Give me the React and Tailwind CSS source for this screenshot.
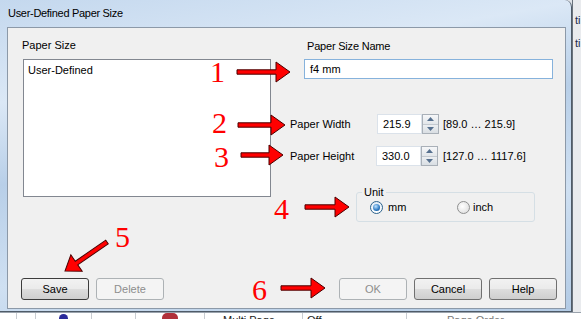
import React from 'react';

const sans = "font-['Liberation_Sans',Arial,sans-serif]";

function Button({ label, disabled, focused, className = '' }) {
    return (
        <div
            className={`w-[68px] h-[22px] rounded-[3px] border flex items-center justify-center text-[11px] ${className} ${
                disabled
                    ? 'border-[#adb2b5] bg-[#f4f4f4] text-[#8d8d8d]'
                    : `${focused ? 'border-[#3c3c3c]' : 'border-[#707070]'} bg-[linear-gradient(#f2f2f2_0%,#ebebeb_48%,#dddddd_52%,#cfcfcf_100%)] text-black`
            }`}
        >
            {label}
        </div>
    );
}

function Spin({ value }) {
    return (
        <div className="flex h-[20px] w-[62px]">
            <div className="flex-1 bg-white border border-[#dbe2ea] pl-[5px] flex items-center text-[11px]">
                {value}
            </div>
            <div className="w-[17px] flex flex-col border border-[#a9b0b8] bg-white">
                <div className="flex-1 flex items-center justify-center border-b border-[#c3c9d0] bg-[linear-gradient(#f6f7f9,#e2e6ea)]">
                    <svg width="7" height="4" viewBox="0 0 7 4"><path d="M0 4 L3.5 0 L7 4 Z" fill="#56708f" /></svg>
                </div>
                <div className="flex-1 flex items-center justify-center bg-[linear-gradient(#eceff2,#d9dee3)]">
                    <svg width="7" height="4" viewBox="0 0 7 4"><path d="M0 0 L3.5 4 L7 0 Z" fill="#56708f" /></svg>
                </div>
            </div>
        </div>
    );
}

function Radio({ checked }) {
    return (
        <div
            className={`w-[13px] h-[13px] rounded-full border flex items-center justify-center ${
                checked
                    ? 'border-[#2c628b] bg-[linear-gradient(#e3eef8,#ffffff)]'
                    : 'border-[#8e8f8f] bg-[radial-gradient(circle_at_40%_40%,#ffffff,#d8d8d8)]'
            }`}
        >
            {checked && (
                <div className="w-[7px] h-[7px] rounded-full bg-[radial-gradient(circle_at_40%_35%,#bfe3ff,#2a78c2_60%,#14467a)]" />
            )}
        </div>
    );
}

function Arrow({ x1, y1, x2, y2 }) {
    const dx = x2 - x1;
    const dy = y2 - y1;
    const len = Math.sqrt(dx * dx + dy * dy);
    const ang = (Math.atan2(dy, dx) * 180) / Math.PI;
    const h = 14;
    const pts = `0,-2.2 ${len - h},-2.2 ${len - h},-10 ${len},0 ${len - h},10 ${len - h},2.2 0,2.2`;
    return (
        <g transform={`translate(${x1} ${y1}) rotate(${ang})`}>
            <polygon points={pts} fill="#ff0000" stroke="#4a0000" strokeWidth="1" strokeLinejoin="miter" />
        </g>
    );
}

const numbers = [
    { n: '1', x: 210, y: 57 },
    { n: '2', x: 212, y: 108 },
    { n: '3', x: 214, y: 142 },
    { n: '4', x: 274, y: 194 },
    { n: '5', x: 115, y: 222 },
    { n: '6', x: 252, y: 275 },
];

export default function App() {
    return (
        <div className={`w-[581px] h-[319px] relative overflow-hidden bg-[#dfe3e8] ${sans}`}>
            <div className="flex h-[312px]">
                {/* dialog window */}
                <div className="w-[572px] h-[312px] rounded-tr-[7px] border-r border-b border-[#4f5b68] bg-[linear-gradient(170deg,#c4d8ee_0%,#dbe8f6_25%,#b8cfe8_45%,#cfe0f2_70%,#b3cbe5_100%)] flex flex-col">
                    <div className="h-[27px] pl-[8px] flex items-center text-[11px] tracking-[-0.3px] text-black">
                        User-Defined Paper Size
                    </div>
                    <div className="ml-[7px] w-[559px] h-[282px] bg-[#f0f0f0] border border-[#8c99a8] flex flex-col text-[11px] text-black">
                        <div className="flex">
                            {/* left column */}
                            <div className="w-[282px] pl-[14px] pt-[10px]">
                                <div className="h-[15px] leading-[15px]">Paper Size</div>
                                <div className="mt-[6px] ml-[1px] w-[248px] h-[138px] bg-white border border-[#828790] pl-[4px] pt-[3px] leading-[15px]">
                                    User-Defined
                                </div>
                            </div>
                            {/* right column */}
                            <div className="flex flex-col">
                                <div className="pl-[17px] pt-[11px] h-[26px] leading-[15px] tracking-[-0.2px]">Paper Size Name</div>
                                <div className="mt-[5px] ml-[14px] w-[249px] h-[20px] bg-white border border-[#86b2dc] pl-[5px] flex items-center">
                                    f4 mm
                                </div>
                                <div className="mt-[35px] flex items-center h-[20px]">
                                    <div className="w-[87px]">Paper Width</div>
                                    <Spin value="215.9" />
                                    <div className="ml-[4px]">[89.0 … 215.9]</div>
                                </div>
                                <div className="mt-[12px] flex items-center h-[20px]">
                                    <div className="w-[86px]">Paper Height</div>
                                    <Spin value="330.0" />
                                    <div className="ml-[5px]">[127.0 … 1117.6]</div>
                                </div>
                                <div className="mt-[26px] ml-[66px] w-[179px] h-[30px] relative border border-[#d5dfe5] rounded-[3px] flex items-center pl-[13px]">
                                    <div className="absolute -top-[8px] left-[5px] px-[2px] bg-[#f0f0f0] leading-[14px]">Unit</div>
                                    <div className="flex items-center gap-[5px] w-[87px]">
                                        <Radio checked />
                                        <span>mm</span>
                                    </div>
                                    <div className="flex items-center gap-[3px]">
                                        <Radio />
                                        <span>inch</span>
                                    </div>
                                </div>
                            </div>
                        </div>
                        <div className="mt-auto mb-[8px] flex pl-[13px]">
                            <Button label="Save" focused />
                            <Button label="Delete" disabled className="ml-[7px]" />
                            <Button label="OK" disabled className="ml-[175px]" />
                            <Button label="Cancel" className="ml-[7px]" />
                            <Button label="Help" className="ml-[7px]" />
                        </div>
                    </div>
                </div>
                {/* background window at right */}
                <div className="flex-1 bg-[#e9ebee] border-l border-[#6a737d] text-[11px] text-[#1a2a4a] leading-none overflow-hidden">
                    <div className="pl-[2px] pt-[15px]">ti</div>
                    <div className="pl-[2px] pt-[12px]">ti</div>
                </div>
            </div>
            {/* background table row at bottom, mostly hidden under the dialog */}
            <div className="h-[7px] flex bg-white border-t border-[#9aa3ad] text-[11px] text-[#1a1a1a] leading-[14px] overflow-hidden">
                <div className="w-[17px] border-r border-[#c8ccd1]" />
                <div className="w-[19px] border-r border-[#c8ccd1]" />
                <div className="w-[56px] flex justify-center border-r border-[#c8ccd1]">
                    <div className="w-[9px] h-[9px] rounded-full bg-[#2a2a9a] mt-[1px]" />
                </div>
                <div className="w-[44px] border-r border-[#c8ccd1]" />
                <div className="w-[68px] flex justify-center">
                    <div className="w-[16px] h-[10px] rounded-full bg-[#b0303a]" />
                </div>
                <div className="w-[98px] pl-[18px] border-l border-[#c8ccd1]">Multi Page</div>
                <div className="w-[104px] pl-[4px] border-l border-[#c8ccd1]">Off</div>
                <div className="flex-1 pl-[40px] border-l border-[#c8ccd1] text-[#777]">Page Order</div>
            </div>

            {/* red annotations */}
            <svg className="absolute inset-0 pointer-events-none" width="581" height="319">
                <Arrow x1={237} y1={72} x2={290} y2={72} />
                <Arrow x1={238} y1={125} x2={285} y2={125} />
                <Arrow x1={241} y1={155} x2={283} y2={155} />
                <Arrow x1={305} y1={207} x2={349} y2={207} />
                <Arrow x1={107} y1={242} x2={65} y2={271} />
                <Arrow x1={281} y1={288} x2={325} y2={288} />
            </svg>
            {numbers.map((d) => (
                <div
                    key={d.n}
                    className="absolute text-[30px] leading-[30px] text-[#ff0000] font-['Liberation_Serif','Times_New_Roman',serif]"
                    style={{ left: d.x, top: d.y }}
                >
                    {d.n}
                </div>
            ))}
        </div>
    );
}
